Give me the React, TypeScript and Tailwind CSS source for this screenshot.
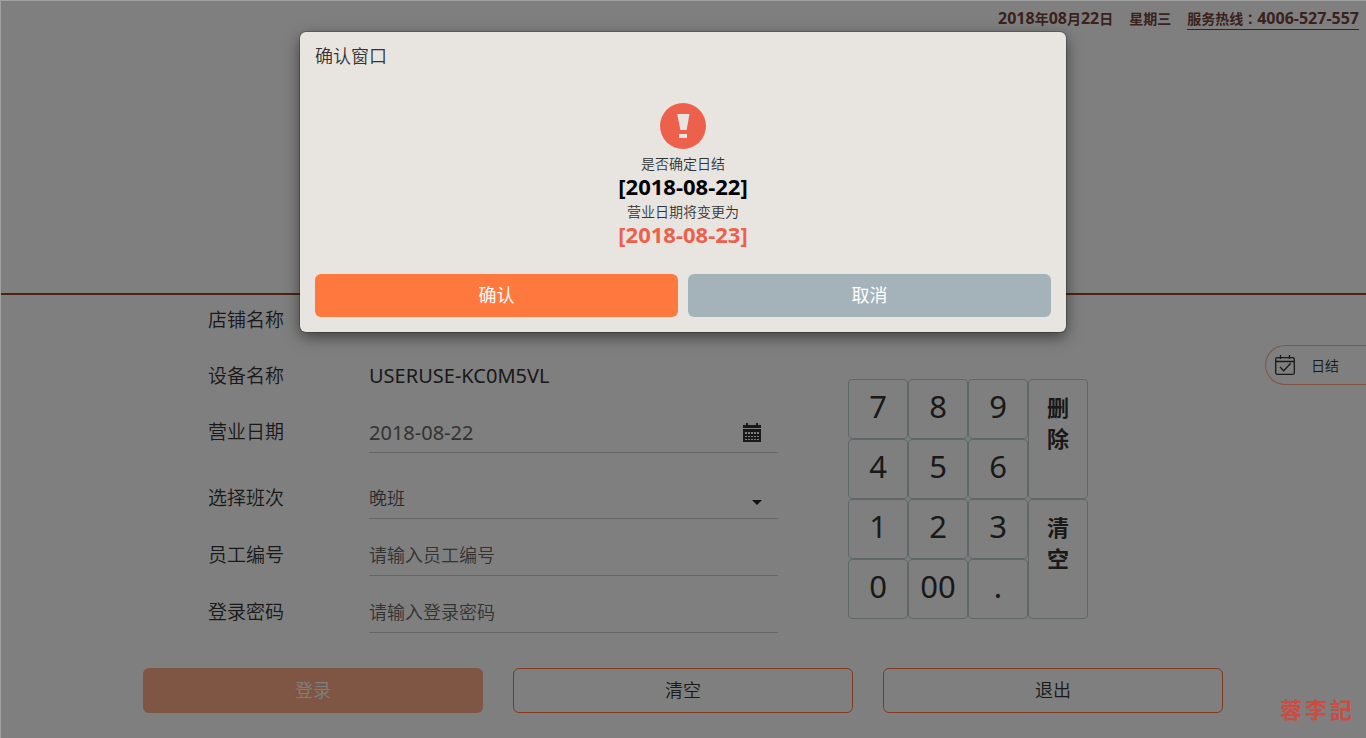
import { useState, type ReactNode } from 'react';

const PAD_KEYS = ['7', '8', '9', '4', '5', '6', '1', '2', '3', '0', '00', '.'];

function CalendarSolid() {
  return (
    <svg width="18" height="19" viewBox="0 0 18 19" aria-hidden="true" shapeRendering="crispEdges">
      <path fill="#333" d="M3 0h2v2h8V0h2v2h3v3H0V2h3zM0 6h18v13H0z" />
      {[9, 13, 16].map((y) =>
        [2, 5, 8, 11, 14].map((x) => (
          <rect key={`${x}-${y}`} x={x} y={y} width="2" height={y === 9 ? 2 : 1} fill="#fff" />
        )),
      )}
    </svg>
  );
}

function CalendarCheck() {
  return (
    <svg width="20" height="20" viewBox="0 0 20 20" fill="none" stroke="#333" strokeWidth="1.3" aria-hidden="true">
      <rect x="0.7" y="2.7" width="18.6" height="16.6" rx="1.5" />
      <path d="M1 6.5h18M5.5 0v4M14.5 0v4M5 12l3.7 3.7 7-7.5" />
    </svg>
  );
}

function Num({ children }: { children: ReactNode }) {
  return <span className="text-[16px]">{children}</span>;
}

function Row({ id, label, lined, children }: { id: string; label: string; lined?: boolean; children?: ReactNode }) {
  return (
    <div className="flex">
      <label htmlFor={id} className="flex h-10 w-[161px] shrink-0 items-center text-[19px] text-[#333]">
        {label}
      </label>
      <div
        className={
          lined
            ? 'flex h-[41px] min-w-0 flex-1 items-center border-b border-[#ccc] text-[18px] text-[#555]'
            : 'flex h-10 min-w-0 flex-1 items-center text-[20px] text-[#333]'
        }
      >
        {children}
      </div>
    </div>
  );
}

function Keypad({ onKey, onDelete, onClear }: { onKey: (k: string) => void; onDelete: () => void; onClear: () => void }) {
  const tall =
    'flex flex-1 flex-col items-center rounded border border-[#bcd0d0] pt-3 text-[22px] leading-[31px] font-bold';
  return (
    <div className="flex h-[240px] w-[240px] shrink-0 text-[#333]">
      <div className="grid flex-[3] grid-cols-3 grid-rows-4">
        {PAD_KEYS.map((k) => (
          <button
            key={k}
            type="button"
            onClick={() => onKey(k)}
            className="rounded border border-[#bcd0d0] pb-1.5 font-['Noto_Sans',sans-serif] text-[31px] leading-none font-normal"
          >
            {k}
          </button>
        ))}
      </div>
      <div className="flex flex-1 flex-col">
        <button type="button" onClick={onDelete} className={tall}>
          <span>删</span>
          <span>除</span>
        </button>
        <button type="button" onClick={onClear} className={tall}>
          <span>清</span>
          <span>空</span>
        </button>
      </div>
    </div>
  );
}

function ConfirmDialog({ onClose }: { onClose: () => void }) {
  const action = 'h-[43px] flex-1 rounded-md text-[18px] font-normal text-white';
  return (
    <div
      role="dialog"
      aria-modal="true"
      aria-labelledby="dialog-title"
      className="mx-4 w-full max-w-[766px] rounded-md bg-[#e8e5e0] shadow-[0_0_0_1px_rgba(0,0,0,0.2),0_5px_15px_rgba(0,0,0,0.5)]"
    >
      <h2 id="dialog-title" className="flex h-[54px] items-center border-b border-[#e5e5e5] px-[15px] pb-1 text-[18px] text-[#333]">
        确认窗口
      </h2>
      <div className="flex flex-col items-center pt-[17px] text-[14px] leading-6 text-[#333]">
        <svg width="46" height="46" viewBox="0 0 46 46" className="mb-[3px]" aria-hidden="true">
          <circle cx="23" cy="23" r="23" fill="#ec604c" />
          <path fill="#e8e5e0" d="M18 11h11q.5 0 .4.6L26.6 27h-6.2L17.3 11.6q0-.6.7-.6zM19 31h8v4h-8z" />
        </svg>
        <p>是否确定日结</p>
        <p className="pb-1 text-[22px] leading-5 font-bold text-black">[2018-08-22]</p>
        <p>营业日期将变更为</p>
        <p className="pb-1 text-[22px] leading-5 font-bold text-[#ec604c]">[2018-08-23]</p>
      </div>
      <div className="flex gap-2.5 px-[15px] pt-[26px] pb-[15px]">
        <button type="button" onClick={onClose} className={`${action} bg-[#ff793f]`}>
          确认
        </button>
        <button type="button" onClick={onClose} className={`${action} bg-[#a4b3ba]`}>
          取消
        </button>
      </div>
    </div>
  );
}

export default function App() {
  const [open, setOpen] = useState(true);
  const [staff, setStaff] = useState('');
  const [password, setPassword] = useState('');
  const [shift, setShift] = useState('晚班');
  const clear = () => {
    setStaff('');
    setPassword('');
  };
  const field = 'h-10 w-full min-w-0 bg-transparent outline-none placeholder:text-[#666]';
  const outline = 'h-[45px] rounded-md border border-[#ff793f] text-[18px] text-[#333]';

  return (
    <div className="relative min-h-screen overflow-hidden bg-white font-['Open_Sans','Noto_Sans_CJK_SC',sans-serif] font-[350]">
      <header className="flex h-[295px] items-start justify-end gap-4 border-b-2 border-[#944a2a] px-[7px] pt-2 text-[14px] leading-[21px] font-bold text-[#74443a]">
        <span>
          <Num>2018</Num>年<Num>08</Num>月<Num>22</Num>日
        </span>
        <span>星期三</span>
        <a href="tel:4006527557" className="border-b border-[#74443a]">
          服务热线<span className="font-['Noto_Sans_CJK_TC',sans-serif]">：</span>
          <Num>4006-527-557</Num>
        </a>
      </header>

      <main className="mx-auto max-w-[1080px] pt-[5px]">
        <form onSubmit={(e) => e.preventDefault()}>
          <div className="flex gap-[70px] pl-[65px]">
            <div className="flex w-[570px] flex-col gap-4">
              <Row id="shop" label="店铺名称">
                <output id="shop" />
              </Row>
              <Row id="device" label="设备名称">
                <output id="device" className="font-['Noto_Sans',sans-serif] font-normal">
                  USERUSE-KC0M5VL
                </output>
              </Row>
              <Row id="date" label="营业日期" lined>
                <input
                  id="date"
                  readOnly
                  value="2018-08-22"
                  className={`${field} font-['Noto_Sans',sans-serif] text-[20px] font-normal text-[#666]`}
                />
                <button type="button" aria-label="营业日期" className="mr-[17px]">
                  <CalendarSolid />
                </button>
              </Row>
              <div className="mt-[9px]">
                <Row id="shift" label="选择班次" lined>
                  <select id="shift" value={shift} onChange={(e) => setShift(e.target.value)} className={`${field} appearance-none`}>
                    <option>晚班</option>
                    <option>早班</option>
                  </select>
                  <svg width="10" height="5" viewBox="0 0 10 5" className="mt-2 mr-4 shrink-0" aria-hidden="true">
                    <path fill="#222" d="M0 0h10L5 5z" />
                  </svg>
                </Row>
              </div>
              <Row id="staff" label="员工编号" lined>
                <input id="staff" value={staff} onChange={(e) => setStaff(e.target.value)} placeholder="请输入员工编号" className={field} />
              </Row>
              <Row id="password" label="登录密码" lined>
                <input
                  id="password"
                  type="password"
                  value={password}
                  onChange={(e) => setPassword(e.target.value)}
                  placeholder="请输入登录密码"
                  className={field}
                />
              </Row>
            </div>
            <div className="pt-[79px]">
              <Keypad onKey={(k) => setStaff((s) => s + k)} onDelete={() => setStaff((s) => s.slice(0, -1))} onClear={clear} />
            </div>
          </div>
          <div className="grid grid-cols-3 gap-[30px] pt-[35px] pb-6">
            <button type="submit" className="h-[45px] rounded-md bg-[#ffaa86] text-[18px] text-white">
              登录
            </button>
            <button type="button" onClick={clear} className={outline}>
              清空
            </button>
            <button type="button" className={outline}>
              退出
            </button>
          </div>
        </form>
      </main>

      <button
        type="button"
        onClick={() => setOpen(true)}
        className="absolute top-[345px] right-0 flex h-10 w-[101px] items-center gap-4 rounded-l-full border border-r-0 border-[#ffaa86] pl-[9px] text-[14px] text-[#333]"
      >
        <CalendarCheck />
        日结
      </button>

      {open && (
        <div className="absolute inset-0 flex items-start justify-center bg-black/50 pt-8 shadow-[inset_1px_1px_0_#a0a0a0]">
          <ConfirmDialog onClose={() => setOpen(false)} />
        </div>
      )}

      <div className="absolute right-3.5 bottom-3.5 flex gap-[3px] font-['Noto_Sans_CJK_TC',sans-serif] text-[22px] leading-8 font-bold text-[#cc4b42]">
        <span>蓉</span>
        <span>李</span>
        <span>記</span>
      </div>
    </div>
  );
}
